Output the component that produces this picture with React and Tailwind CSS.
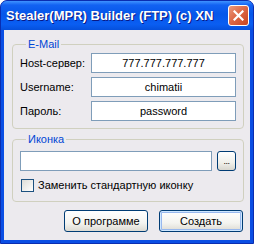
export default function App() {
  const font = "font-['Liberation_Sans',Arial,sans-serif]"
  const field = 'h-[20px] border border-[#7F9DB9] bg-white flex items-center justify-center text-[11px] leading-[13px] text-black'
  const xpButton =
    'h-[22px] w-[84px] rounded-[3px] border border-[#003C74] bg-[linear-gradient(to_bottom,#FFFFFF_0%,#F4F4F0_60%,#DCDAD2_100%)] text-[11px] leading-[13px] text-black flex items-center justify-center'
  const label = 'w-[71px] text-[11px] leading-[13px] text-black'

  return (
    <div className={`w-[254px] h-[244px] flex flex-col rounded-t-[7px] overflow-hidden bg-[#0A4EE4] border border-[#0A2DB0] ${font}`}>
      {/* Title bar */}
      <div className="h-[29px] shrink-0 flex items-center justify-between pl-[5px] pr-[4px] bg-[linear-gradient(to_bottom,#3F93FF_0%,#1262F2_14%,#0557EA_45%,#0A5EF2_80%,#0550DC_100%)]">
        <span className="text-white font-bold text-[13px] leading-[16px] [text-shadow:1px_1px_#0A1883] whitespace-nowrap">
          Stealer(MPR) Builder (FTP) (c) XN
        </span>
        <div className="w-[21px] h-[21px] rounded-[3px] border border-white bg-[linear-gradient(135deg,#EB9A7E_0%,#DD6A48_45%,#C8431F_100%)] flex items-center justify-center">
          <svg width="11" height="11" viewBox="0 0 11 11">
            <path d="M1.5 1.5 L9.5 9.5 M9.5 1.5 L1.5 9.5" stroke="white" strokeWidth="2.2" strokeLinecap="square" />
          </svg>
        </div>
      </div>

      {/* Client area */}
      <div className="flex-1 mx-[3px] mb-[3px] bg-[#ECEAEE] flex flex-col pl-[8px] pr-[6px] pt-[8px]">
        <fieldset className="border border-[#D0D0BF] rounded-[4px] px-[7px] pb-[7px] pt-[2px]">
          <legend className="ml-[6px] px-[2px] text-[11px] leading-[13px] text-[#0046D5]">E-Mail</legend>
          <div className="flex flex-col gap-[4px]">
            <div className="flex items-center">
              <span className={label}>Host-сервер:</span>
              <div className={`${field} flex-1`}>777.777.777.777</div>
            </div>
            <div className="flex items-center">
              <span className={label}>Username:</span>
              <div className={`${field} flex-1`}>chimatii</div>
            </div>
            <div className="flex items-center">
              <span className={label}>Пароль:</span>
              <div className={`${field} flex-1`}>password</div>
            </div>
          </div>
        </fieldset>

        <fieldset className="mt-[4px] border border-[#D0D0BF] rounded-[4px] px-[7px] pb-[9px] pt-[5px]">
          <legend className="ml-[6px] px-[2px] text-[11px] leading-[13px] text-[#0046D5]">Иконка</legend>
          <div className="flex items-center gap-[5px]">
            <div className={`${field} flex-1`}></div>
            <div className="w-[19px] h-[20px] rounded-[3px] border border-[#003C74] bg-[linear-gradient(to_bottom,#FFFFFF_0%,#F0F0EA_60%,#D8D6CE_100%)] flex items-end justify-center pb-[4px]">
              <span className="text-[9px] leading-[9px] text-black tracking-[-0.5px]">...</span>
            </div>
          </div>
          <div className="flex items-center gap-[4px] mt-[8px] ml-[1px]">
            <div className="w-[13px] h-[13px] border border-[#1C5180] bg-[linear-gradient(135deg,#DCDCD7_0%,#FFFFFF_100%)]"></div>
            <span className="text-[11px] leading-[13px] text-black">Заменить стандартную иконку</span>
          </div>
        </fieldset>

        <div className="flex justify-end gap-[11px] mt-[8px] pr-[1px]">
          <div className={xpButton}>О программе</div>
          <div className={`${xpButton} shadow-[inset_0_0_0_1px_#CEE7FF,inset_0_0_0_2px_#98B8EE]`}>Создать</div>
        </div>
      </div>
    </div>
  )
}
